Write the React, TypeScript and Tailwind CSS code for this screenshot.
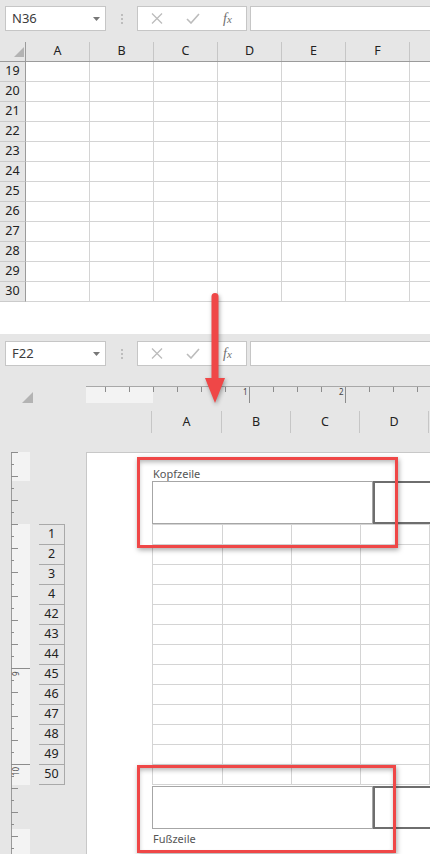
import React from "react"

const TOP_COLS = ["A", "B", "C", "D", "E", "F", ""]
const TOP_ROWS = [19, 20, 21, 22, 23, 24, 25, 26, 27, 28, 29, 30]
const PAGE_ROWS = [1, 2, 3, 4, 42, 43, 44, 45, 46, 47, 48, 49, 50]

const XIcon = () => (
    <svg width="12" height="11" viewBox="0 0 12 11">
        <path d="M1 0.5l10 10M11 0.5l-10 10" stroke="#bcbcbc" strokeWidth="1.3" fill="none" />
    </svg>
)

const CheckIcon = () => (
    <svg width="14" height="11" viewBox="0 0 14 11">
        <path d="M1 6l4 4 8-9" stroke="#bcbcbc" strokeWidth="1.6" fill="none" />
    </svg>
)

const Corner = ({ size }: { size: number }) => (
    <svg width={size} height={size} viewBox="0 0 10 10" className="block">
        <path d="M10 0V10H0z" fill="#b3b3b3" />
    </svg>
)

const Toolbar = ({ cell }: { cell: string }) => (
    <div className="flex h-[25px] pl-[5px]">
        <div className="flex w-[101px] items-center justify-between border border-[#c6c6c6] bg-white pl-[6px] pr-[5px]">
            <span className="text-[13px] leading-none text-[#3c3c3c]">{cell}</span>
            <svg width="7" height="4" viewBox="0 0 7 4">
                <path d="M0 0h7L3.5 4z" fill="#777" />
            </svg>
        </div>
        <div className="flex w-[31px] flex-col items-center justify-center gap-[2px]">
            <span className="h-[2px] w-[2px] bg-[#bdbdbd]" />
            <span className="h-[2px] w-[2px] bg-[#bdbdbd]" />
            <span className="h-[2px] w-[2px] bg-[#bdbdbd]" />
        </div>
        <div className="flex w-[110px] items-center border border-[#c6c6c6] bg-white">
            <div className="flex w-[38px] justify-center"><XIcon /></div>
            <div className="flex w-[33px] justify-center"><CheckIcon /></div>
            <div className="flex flex-1 justify-center">
                <span className="font-['Liberation_Serif',serif] text-[14px] italic leading-none text-[#6f6f6f]">
                    f<span className="text-[11px]">x</span>
                </span>
            </div>
        </div>
        <div className="ml-[3px] flex-1 border border-r-0 border-[#c6c6c6] bg-white" />
    </div>
)

const HRuler = () => {
    const ticks = []
    for (let x = 105; x < 430; x += 24) {
        const rel = x - 86 + 0.5
        const major = (x - 153) % 96 === 0 && x !== 153
        ticks.push(<line key={x} x1={rel} x2={rel} y1={1} y2={major ? 17 : 6} stroke="#8c8c8c" />)
    }
    return (
        <svg width="344" height="17" className="block">
            <rect x="0" y="0" width="67" height="17" fill="#f3f3f3" />
            <line x1="0" x2="344" y1="0.5" y2="0.5" stroke="#a8a8a8" />
            {ticks}
            <text x="157" y="9" fontSize="8" fill="#444" fontFamily="Noto Sans, sans-serif">1</text>
            <text x="253" y="9" fontSize="8" fill="#444" fontFamily="Noto Sans, sans-serif">2</text>
        </svg>
    )
}

const VRuler = () => {
    const ticks = []
    for (let y = 452; y <= 854; y += 12) {
        const d = y - 668
        const long = y === 668 || y === 764
        const mid = d % 24 === 0
        const rel = y - 433 + 0.5
        ticks.push(<line key={y} x1={11} x2={long ? 30 : mid ? 18 : 14} y1={rel} y2={rel} stroke="#8c8c8c" />)
    }
    return (
        <svg width="31" height="421" className="block shrink-0">
            <rect x="11" y="19" width="19" height="29" fill="#f3f3f3" />
            <rect x="11" y="91" width="19" height="261" fill="#f3f3f3" />
            <rect x="11" y="396" width="19" height="25" fill="#f3f3f3" />
            <line x1="11.5" x2="11.5" y1="19" y2="421" stroke="#9a9a9a" />
            {ticks}
            <text transform="translate(19 243) rotate(-90)" fontSize="8" fill="#444" fontFamily="Noto Sans, sans-serif">9</text>
            <text transform="translate(19 343) rotate(-90)" fontSize="8" fill="#444" fontFamily="Noto Sans, sans-serif">10</text>
        </svg>
    )
}

const PageGridRow = () => (
    <div className="flex h-[20px] border-b border-l border-[#d4d4d4]">
        <div className="w-[70px] border-r border-[#d4d4d4]" />
        <div className="w-[69px] border-r border-[#d4d4d4]" />
        <div className="w-[69px] border-r border-[#d4d4d4]" />
        <div className="w-[69px] border-r border-[#d4d4d4]" />
        <div className="flex-1" />
    </div>
)

const HeaderFooterBox = () => (
    <div className="ml-[65px] flex h-[43px]">
        <div className="w-[221px] border border-[#a6a6a6]" />
        <div className="flex-1 border-2 border-r-0 border-[#6e6e6e]" />
    </div>
)

const App = () => {
    return (
        <div className="relative h-[854px] w-[430px] overflow-hidden bg-white font-['Noto_Sans',sans-serif]">
            {/* normal view */}
            <div className="h-[40px] bg-[#e6e6e6] pt-[6px]">
                <Toolbar cell="N36" />
            </div>
            <div className="flex h-[22px] border-b border-[#9b9b9b] bg-[#e6e6e6] pt-[2px]">
                <div className="flex w-[26px] shrink-0 items-end justify-end border-r border-[#9b9b9b] pb-[4px] pr-[1px]">
                    <Corner size={10} />
                </div>
                {TOP_COLS.map((c, i) => (
                    <div key={i} className="flex w-[64px] shrink-0 items-center justify-center border-r border-[#c6c6c6] text-[12.5px] leading-none text-[#222]">
                        {c}
                    </div>
                ))}
            </div>
            {TOP_ROWS.map((r) => (
                <div key={r} className="flex h-[20px]">
                    <div className="flex w-[26px] shrink-0 items-center justify-center border-b border-r border-b-[#cbcbcb] border-r-[#9b9b9b] bg-[#e6e6e6] text-[12.5px] leading-none text-[#222]">
                        {r}
                    </div>
                    {TOP_COLS.map((_, i) => (
                        <div key={i} className="w-[64px] shrink-0 border-b border-r border-[#d4d4d4]" />
                    ))}
                </div>
            ))}
            <div className="h-[32px]" />

            {/* page layout view */}
            <div className="flex h-[520px] flex-col bg-[#e6e6e6]">
                <div className="h-[52px] pt-[7px]">
                    <Toolbar cell="F22" />
                </div>
                <div className="flex h-[17px]">
                    <div className="flex w-[86px] shrink-0 items-end pl-[22px]">
                        <Corner size={11} />
                    </div>
                    <HRuler />
                </div>
                <div className="mt-[8px] flex h-[22px]">
                    <div className="w-[152px] shrink-0 border-r border-[#c6c6c6]" />
                    {["A", "B", "C", "D"].map((c, i) => (
                        <div key={c} className={`flex ${i === 0 ? "w-[70px]" : "w-[69px]"} shrink-0 items-center justify-center border-r border-[#c6c6c6] text-[12.5px] leading-none text-[#222]`}>
                            {c}
                        </div>
                    ))}
                </div>
                <div className="flex flex-1">
                    <VRuler />
                    <div className="ml-[8px] mt-[91px] w-[26px] shrink-0 self-start border-t border-[#a9a9a9]">
                        {PAGE_ROWS.map((r) => (
                            <div key={r} className="flex h-[20px] items-center justify-center border-b border-r border-[#a9a9a9] text-[12.5px] leading-none text-[#222]">
                                {r}
                            </div>
                        ))}
                    </div>
                    <div className="ml-[21px] mt-[19px] flex-1 border-l border-t border-[#c8c8c8] bg-white">
                        <div className="flex h-[28px] items-end pb-[2px] pl-[66px] text-[11px] leading-none text-[#555]">
                            Kopfzeile
                        </div>
                        <HeaderFooterBox />
                        <div className="ml-[65px] border-t border-[#d4d4d4]">
                            {PAGE_ROWS.map((r) => (
                                <PageGridRow key={r} />
                            ))}
                        </div>
                        <div className="mt-[1px]">
                            <HeaderFooterBox />
                        </div>
                        <div className="pl-[66px] pt-[4px] text-[11px] leading-none text-[#555]">Fußzeile</div>
                    </div>
                </div>
            </div>

            {/* callouts */}
            <div className="absolute left-[137px] top-[457px] h-[91px] w-[261px] border-[3px] border-[#ef4747] shadow-[1px_2px_5px_rgba(0,0,0,0.35),inset_0_3px_5px_-1px_rgba(0,0,0,0.3)]" />
            <div className="absolute left-[137px] top-[765px] h-[88px] w-[259px] border-[3px] border-[#ef4747] shadow-[1px_2px_5px_rgba(0,0,0,0.35),inset_0_3px_5px_-1px_rgba(0,0,0,0.3)]" />
            <svg width="30" height="120" className="absolute left-[200px] top-[288px] drop-shadow-[1px_2px_2px_rgba(0,0,0,0.35)]">
                <rect x="11.5" y="5" width="7" height="88" rx="3.5" fill="#ef4747" />
                <path d="M5 90H25L15 115z" fill="#ef4747" />
            </svg>
        </div>
    )
}

export default App
